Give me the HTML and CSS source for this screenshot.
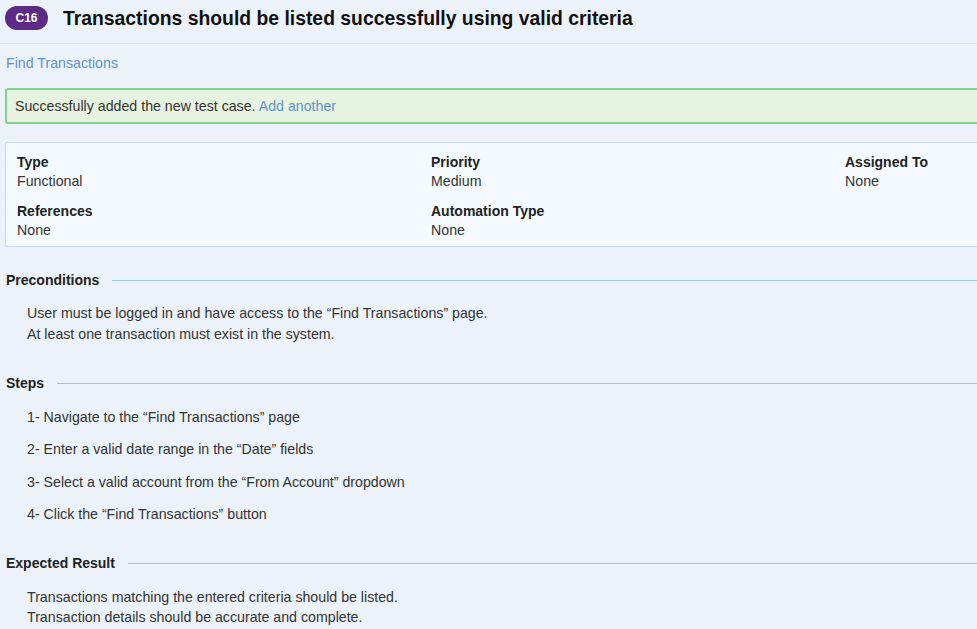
FILE: index.html
```html
<!DOCTYPE html>
<html lang="en">
<head>
<meta charset="utf-8">
<title>C16 Transactions</title>
<link rel="stylesheet" href="styles.css">
</head>
<body>
<div class="page">
  <header class="header">
    <span class="badge">C16</span>
    <h1 class="title">Transactions should be listed successfully using valid criteria</h1>
  </header>
  <a class="section-link" href="#">Find Transactions</a>
  <div class="alert">Successfully added the new test case. <a href="#" class="alert-link">Add another</a></div>
  <div class="details">
    <div class="field"><div class="label">Type</div><div class="value">Functional</div></div>
    <div class="field"><div class="label">Priority</div><div class="value">Medium</div></div>
    <div class="field"><div class="label">Assigned To</div><div class="value">None</div></div>
    <div class="field"><div class="label">References</div><div class="value">None</div></div>
    <div class="field"><div class="label">Automation Type</div><div class="value">None</div></div>
  </div>

  <h2 class="heading heading-pre"><span>Preconditions</span></h2>
  <div class="para">
    <p>User must be logged in and have access to the “Find Transactions” page.</p>
    <p>At least one transaction must exist in the system.</p>
  </div>

  <h2 class="heading heading-steps"><span>Steps</span></h2>
  <ol class="steps">
    <li>1- Navigate to the “Find Transactions” page</li>
    <li>2- Enter a valid date range in the “Date” fields</li>
    <li>3- Select a valid account from the “From Account” dropdown</li>
    <li>4- Click the “Find Transactions” button</li>
  </ol>

  <h2 class="heading heading-exp"><span>Expected Result</span></h2>
  <div class="para para-exp">
    <p>Transactions matching the entered criteria should be listed.</p>
    <p>Transaction details should be accurate and complete.</p>
  </div>
</div>
</body>
</html>
```

FILE: styles.css
```css
html, body {
  margin: 0;
  padding: 0;
  background: #ecf2f9;
}
body {
  font-family: "Liberation Sans", Arial, sans-serif;
  font-size: 14.2px;
  color: #333;
}
.page {
  width: 977px;
  height: 629px;
  overflow: hidden;
}
.header {
  display: flex;
  align-items: center;
  gap: 15px;
  padding: 6px 5px 13px 5px;
  border-bottom: 1px solid #dbe5ef;
}
.badge {
  display: inline-flex;
  align-items: center;
  justify-content: center;
  width: 43px;
  height: 24px;
  border-radius: 12px;
  background: #5b2b86;
  color: #fff;
  font-weight: bold;
  font-size: 12px;
}
.title {
  margin: 0;
  font-size: 19.35px;
  font-weight: bold;
  color: #111;
  line-height: 24px;
}
.section-link {
  display: block;
  margin: 9px 0 0 6px;
  line-height: 20px;
  color: #5f93c8;
  text-decoration: none;
}
.alert {
  margin: 15px -10px 0 5px;
  height: 32px;
  line-height: 32px;
  padding-left: 8px;
  border: 2px solid #84cf8e;
  border-radius: 3px;
  background: #e7f3e1;
  color: #333;
}
.alert-link {
  color: #5f93c8;
  text-decoration: none;
}
.details {
  margin: 18px -10px 0 5px;
  padding: 10px 11px 6px 11px;
  border: 1px solid #c8d8e8;
  border-radius: 2px;
  background: #f5faff;
  display: grid;
  grid-template-columns: 414px 414px 1fr;
  row-gap: 11px;
}
.label {
  font-weight: bold;
  font-size: 14px;
  color: #222;
  line-height: 19px;
}
.value {
  line-height: 19px;
  color: #333;
}
.heading {
  display: flex;
  align-items: center;
  gap: 13px;
  margin: 0 0 0 6px;
  font-size: 14px;
  font-weight: bold;
  color: #222;
  line-height: 20px;
}
.heading::after {
  content: "";
  flex: 1;
  height: 1px;
  background: #a7c3dc;
}
.heading-pre { margin-top: 23px; }
.heading-steps { margin-top: 28px; }
.heading-exp { margin-top: 23px; }
.para {
  margin-top: 13px;
  padding-left: 27px;
}
.para p {
  margin: 0;
  line-height: 21px;
}
.para-exp { margin-top: 14px; }
.para-exp p { line-height: 20px; }
.steps {
  list-style: none;
  margin: 8px 0 0 0;
  padding: 0 0 0 27px;
}
.steps li {
  line-height: 32.3px;
}
```
